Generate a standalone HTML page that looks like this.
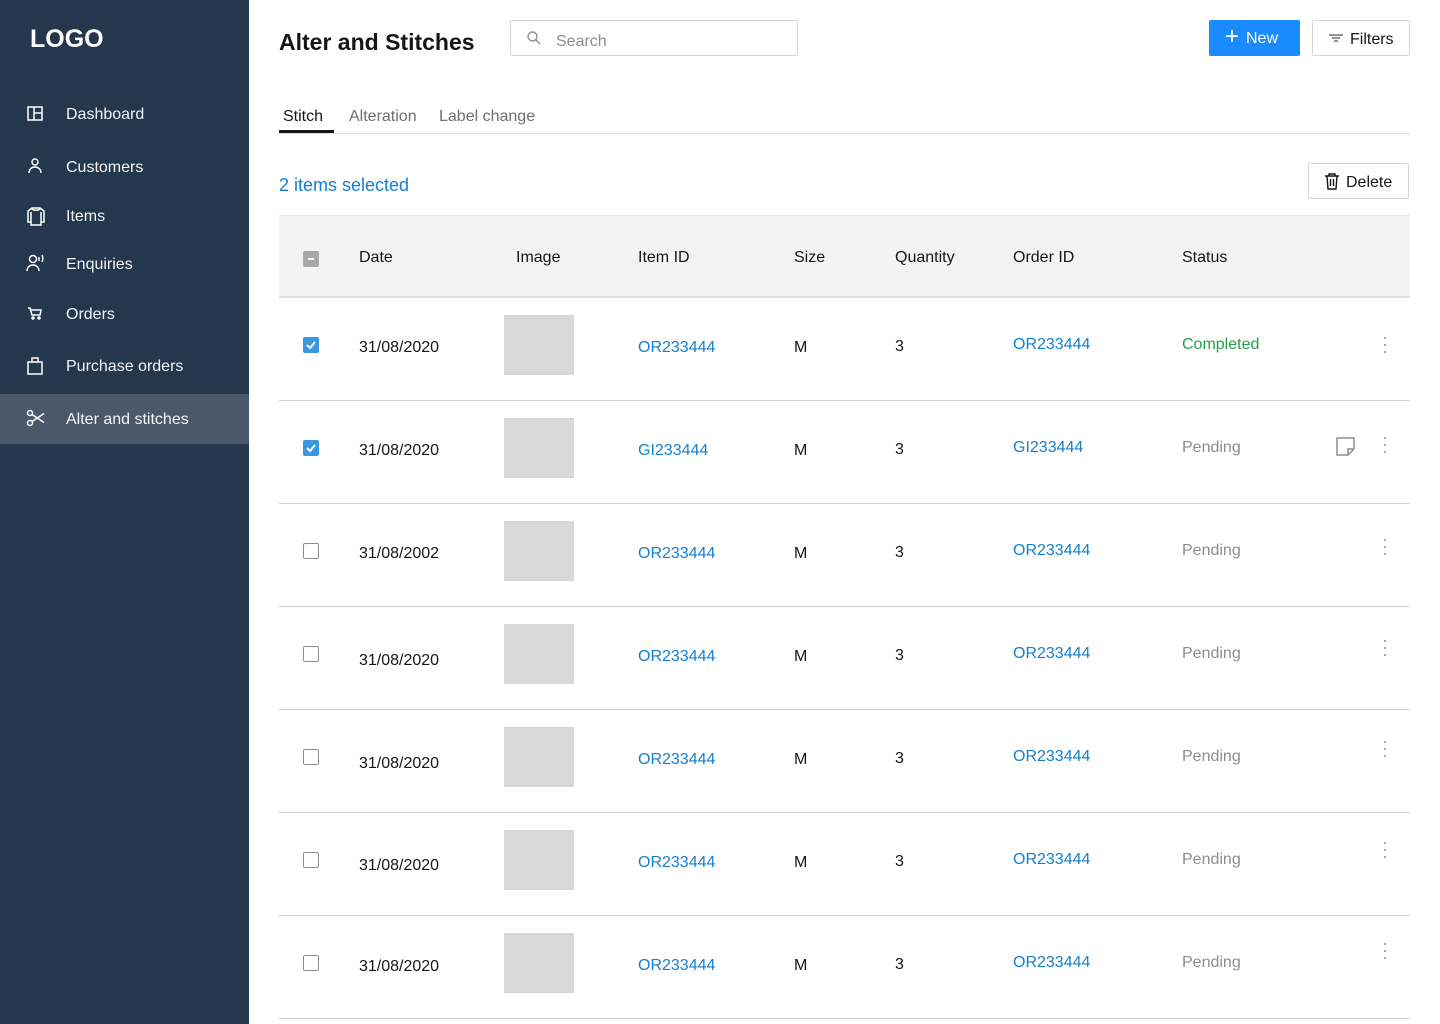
<!DOCTYPE html>
<html><head><meta charset="utf-8"><style>
*{margin:0;padding:0;box-sizing:border-box}
body{width:1440px;height:1024px;overflow:hidden;font-family:"Liberation Sans",sans-serif;background:#fff;position:relative;color:#161616}
.sb{position:absolute;left:0;top:0;width:249px;height:1024px;background:#24374d}
.logo{position:absolute;left:30px;top:25px;color:#fff;font-size:25px;font-weight:bold;letter-spacing:0px}
.nav{position:absolute;left:0;width:249px;height:50px;color:#f2f4f8;font-size:16px;line-height:50px}
.nav span{position:absolute;left:66px;top:1px}
.nav svg{position:absolute;left:26px;top:15px}
.act{background:#4a5869}
.a{position:absolute;white-space:nowrap;margin-top:2px}
.btn{position:absolute;border:1px solid #d8d8d8;border-radius:2px;font-size:16px;color:#161616;background:#fff}
.btn span{margin-top:1px}
.row{position:absolute;left:279px;width:1131px;height:103px;border-bottom:1px solid #d0d0d0}
.row .a{font-size:16px}
.cb{position:absolute;left:24px;width:16px;height:16px;border:1px solid #8d8d8d;border-radius:2px;background:#fff}
.cb.on{background:#3a97e0;border-color:#3a97e0}
.img{position:absolute;left:225px;top:17px;width:70px;height:60px;background:#d8d8d8}
.blue{color:#1480d0}
.dots{position:absolute;left:1105px;width:4px}
.dots i{display:block;width:2px;height:2px;background:#a8a8a8;margin:0 0 5px 0}
</style></head><body>
<div class="sb">
<div class="logo">LOGO</div>
<div class="nav" style="top:89px"><svg width="18" height="18" viewBox="0 0 18 18" fill="none" stroke="#fff" stroke-width="1.5"><rect x="2" y="3" width="14" height="13"/><path d="M8 3v13M8 9h8"/></svg><span>Dashboard</span></div>
<div class="nav" style="top:142px"><svg width="18" height="18" viewBox="0 0 18 18" fill="none" stroke="#fff" stroke-width="1.5"><circle cx="9" cy="5" r="3"/><path d="M3 16c0-4 3-6 6-6s6 2 6 6"/></svg><span>Customers</span></div>
<div class="nav" style="top:191px"><svg width="20" height="20" viewBox="0 0 20 20" fill="none" stroke="#fff" stroke-width="1.5"><path d="M6 2h8l4 3v11h-3v3H5v-3H2V5z M6 2c0 3 8 3 8 0M5 6v10M15 6v10"/></svg><span>Items</span></div>
<div class="nav" style="top:239px"><svg width="20" height="18" viewBox="0 0 20 18" fill="none" stroke="#fff" stroke-width="1.5"><circle cx="7" cy="5" r="3.5"/><path d="M1 17c0-4 3-6 6-6s6 2 6 6M13 3v4M16 1c1 2 1 5 0 7"/></svg><span>Enquiries</span></div>
<div class="nav" style="top:289px"><svg width="18" height="18" viewBox="0 0 18 18" fill="none" stroke="#fff" stroke-width="1.5"><path d="M2 4h2l2 7h8l1-5H5"/><circle cx="7" cy="14" r="1"/><circle cx="13" cy="14" r="1"/></svg><span>Orders</span></div>
<div class="nav" style="top:341px"><svg width="18" height="20" viewBox="0 0 18 20" fill="none" stroke="#fff" stroke-width="1.5"><rect x="2" y="6" width="14" height="12"/><path d="M6 6V2h6v4"/></svg><span>Purchase orders</span></div>
<div class="nav act" style="top:394px"><svg width="20" height="18" viewBox="0 0 20 18" fill="none" stroke="#fff" stroke-width="1.5"><circle cx="4" cy="4" r="2.5"/><circle cx="4" cy="14" r="2.5"/><path d="M6 5.5l12 8M6 12.5l12-8"/></svg><span>Alter and stitches</span></div>
</div>

<div class="a" style="left:279px;top:27px;font-size:23px;font-weight:bold;color:#161616">Alter and Stitches</div>
<div style="position:absolute;left:510px;top:20px;width:288px;height:36px;border:1px solid #d8d8d8;border-radius:2px"></div>
<svg style="position:absolute;left:526px;top:30px" width="16" height="16" viewBox="0 0 16 16" fill="none" stroke="#8d8d8d" stroke-width="1.4"><circle cx="6.5" cy="6.5" r="4.5"/><path d="M10 10l4 4"/></svg>
<div class="a" style="left:556px;top:31px;font-size:16px;color:#8d8d8d">Search</div>
<div style="position:absolute;left:1209px;top:20px;width:91px;height:36px;background:#1a8cff;border-radius:2px;color:#fff;font-size:16px;line-height:36px"><span style="position:absolute;left:16px;font-size:24px;top:-1px;font-weight:300">+</span><span style="position:absolute;left:37px;top:1px">New</span></div>
<div class="btn" style="left:1312px;top:20px;width:98px;height:36px;line-height:34px"><svg style="position:absolute;left:15px;top:12px" width="16" height="10" viewBox="0 0 16 10" stroke="#6f6f6f" stroke-width="1.4"><path d="M1 2h14M4 5h8M6 8h4"/></svg><span style="position:absolute;left:37px;top:1px">Filters</span></div>

<div class="a" style="left:283px;top:106px;font-size:16px;color:#161616">Stitch</div>
<div style="position:absolute;left:279px;top:130px;width:55px;height:3px;background:#161616"></div>
<div class="a" style="left:349px;top:106px;font-size:16px;color:#6f6f6f">Alteration</div>
<div class="a" style="left:439px;top:106px;font-size:16px;color:#6f6f6f">Label change</div>
<div style="position:absolute;left:279px;top:133px;width:1131px;height:1px;background:#e0e0e0"></div>

<div class="a blue" style="left:279px;top:173px;font-size:18px">2 items selected</div>
<div class="btn" style="left:1308px;top:163px;width:101px;height:36px;line-height:34px"><svg style="position:absolute;left:15px;top:9px" width="16" height="17" viewBox="0 0 16 17" fill="none" stroke="#161616" stroke-width="1.4"><path d="M1 3h14M5 3V1h6v2M3 3l1 13h8l1-13M6.5 6v7M9.5 6v7"/></svg><span style="position:absolute;left:37px;top:1px">Delete</span></div>

<div style="position:absolute;left:279px;top:215px;width:1131px;height:83px;background:#f3f3f3;border-top:1px solid #e6e6e6;border-bottom:2px solid #e0e0e0"></div>
<div style="position:absolute;left:303px;top:251px;width:16px;height:16px;background:#a8a8a8;border-radius:2px"><div style="position:absolute;left:5px;top:7px;width:6px;height:2px;background:#fff"></div></div>
<div class="a" style="left:359px;top:247px;font-size:16px">Date</div>
<div class="a" style="left:516px;top:247px;font-size:16px">Image</div>
<div class="a" style="left:638px;top:247px;font-size:16px">Item ID</div>
<div class="a" style="left:794px;top:247px;font-size:16px">Size</div>
<div class="a" style="left:895px;top:247px;font-size:16px">Quantity</div>
<div class="a" style="left:1013px;top:247px;font-size:16px">Order ID</div>
<div class="a" style="left:1182px;top:247px;font-size:16px">Status</div>

<div class="row" style="top:298px"><div class="cb on" style="top:39px"><svg width="14" height="14" viewBox="0 0 14 14" fill="none" stroke="#fff" stroke-width="2"><path d="M3 7l3 3 5-6"/></svg></div><div class="a" style="left:80px;top:39px">31/08/2020</div><div class="img"></div><div class="a blue" style="left:359px;top:39px">OR233444</div><div class="a" style="left:515px;top:39px">M</div><div class="a" style="left:616px;top:38px">3</div><div class="a blue" style="left:734px;top:36px">OR233444</div><div class="a" style="left:903px;top:36px;color:#24a148">Completed</div><div class="dots" style="top:39px"><i></i><i></i><i></i></div></div>

<div class="row" style="top:401px"><div class="cb on" style="top:39px"><svg width="14" height="14" viewBox="0 0 14 14" fill="none" stroke="#fff" stroke-width="2"><path d="M3 7l3 3 5-6"/></svg></div><div class="a" style="left:80px;top:39px">31/08/2020</div><div class="img"></div><div class="a blue" style="left:359px;top:39px">GI233444</div><div class="a" style="left:515px;top:39px">M</div><div class="a" style="left:616px;top:38px">3</div><div class="a blue" style="left:734px;top:36px">GI233444</div><div class="a" style="left:903px;top:36px;color:#8d8d8d">Pending</div><svg style="position:absolute;left:1057px;top:36px" width="19" height="19" viewBox="0 0 19 19" fill="none" stroke="#8d8d8d" stroke-width="1.5"><path d="M1 1h17v11l-6 6H1z M12 18v-6h6"/></svg><div class="dots" style="top:36px"><i></i><i></i><i></i></div></div>

<div class="row" style="top:504px"><div class="cb" style="top:39px"></div><div class="a" style="left:80px;top:39px">31/08/2002</div><div class="img"></div><div class="a blue" style="left:359px;top:39px">OR233444</div><div class="a" style="left:515px;top:39px">M</div><div class="a" style="left:616px;top:38px">3</div><div class="a blue" style="left:734px;top:36px">OR233444</div><div class="a" style="left:903px;top:36px;color:#8d8d8d">Pending</div><div class="dots" style="top:35px"><i></i><i></i><i></i></div></div>

<div class="row" style="top:607px"><div class="cb" style="top:39px"></div><div class="a" style="left:80px;top:43px">31/08/2020</div><div class="img"></div><div class="a blue" style="left:359px;top:39px">OR233444</div><div class="a" style="left:515px;top:39px">M</div><div class="a" style="left:616px;top:38px">3</div><div class="a blue" style="left:734px;top:36px">OR233444</div><div class="a" style="left:903px;top:36px;color:#8d8d8d">Pending</div><div class="dots" style="top:33px"><i></i><i></i><i></i></div></div>

<div class="row" style="top:710px"><div class="cb" style="top:39px"></div><div class="a" style="left:80px;top:43px">31/08/2020</div><div class="img"></div><div class="a blue" style="left:359px;top:39px">OR233444</div><div class="a" style="left:515px;top:39px">M</div><div class="a" style="left:616px;top:38px">3</div><div class="a blue" style="left:734px;top:36px">OR233444</div><div class="a" style="left:903px;top:36px;color:#8d8d8d">Pending</div><div class="dots" style="top:31px"><i></i><i></i><i></i></div></div>

<div class="row" style="top:813px"><div class="cb" style="top:39px"></div><div class="a" style="left:80px;top:42px">31/08/2020</div><div class="img"></div><div class="a blue" style="left:359px;top:39px">OR233444</div><div class="a" style="left:515px;top:39px">M</div><div class="a" style="left:616px;top:38px">3</div><div class="a blue" style="left:734px;top:36px">OR233444</div><div class="a" style="left:903px;top:36px;color:#8d8d8d">Pending</div><div class="dots" style="top:29px"><i></i><i></i><i></i></div></div>

<div class="row" style="top:916px"><div class="cb" style="top:39px"></div><div class="a" style="left:80px;top:40px">31/08/2020</div><div class="img"></div><div class="a blue" style="left:359px;top:39px">OR233444</div><div class="a" style="left:515px;top:39px">M</div><div class="a" style="left:616px;top:38px">3</div><div class="a blue" style="left:734px;top:36px">OR233444</div><div class="a" style="left:903px;top:36px;color:#8d8d8d">Pending</div><div class="dots" style="top:27px"><i></i><i></i><i></i></div></div>
</body></html>
